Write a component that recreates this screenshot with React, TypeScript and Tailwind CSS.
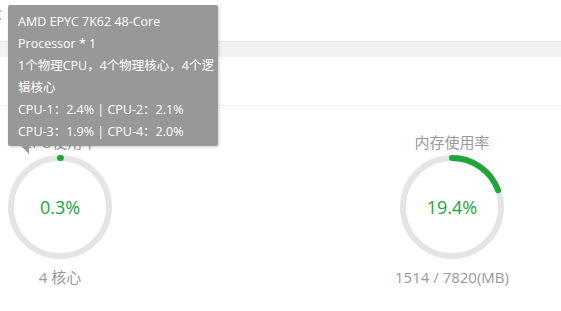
import React from "react";

const GREEN = "#20a53a";

function Ring({ percent }: { percent: number }) {
  const r = 49;
  const c = 2 * Math.PI * r;
  return (
    <div className="relative h-[104px] w-[104px]">
      <svg width="104" height="104" viewBox="0 0 104 104" className="-rotate-90">
        <circle cx="52" cy="52" r={r} fill="none" stroke="#e5e5e5" strokeWidth="6" />
        <circle
          cx="52"
          cy="52"
          r={r}
          fill="none"
          stroke={GREEN}
          strokeWidth="6"
          strokeLinecap="round"
          strokeDasharray={`${(c * percent) / 100} ${c}`}
        />
      </svg>
      <div className="absolute inset-0 flex items-center justify-center text-[18px] text-[#20a53a]">
        {percent}%
      </div>
    </div>
  );
}

function Gauge({
  title,
  percent,
  footer,
}: {
  title: string;
  percent: number;
  footer: string;
}) {
  return (
    <div className="flex w-[104px] flex-col items-center">
      <div className="whitespace-nowrap text-[15px] leading-5 text-[#999]">{title}</div>
      <div className="mt-[3px]">
        <Ring percent={percent} />
      </div>
      <div className="mt-[8px] whitespace-nowrap text-[15px] leading-5 text-[#999]">
        {footer}
      </div>
    </div>
  );
}

export default function App() {
  return (
    <div
      className="relative h-[311px] w-[561px] overflow-hidden bg-white"
      style={{ fontFamily: '"Open Sans", "Noto Sans CJK SC", sans-serif' }}
    >
      {/* header strip */}
      <div className="h-[42px] border-b border-[#e6e6e6]">
        <span className="-ml-[4px] block pt-[4px] text-[14px] leading-5 text-[#555]">：</span>
      </div>
      <div className="h-[15px] bg-[#f2f2f2]" />
      <div className="h-[49px] border-b border-[#eee]" />

      {/* gauges */}
      <div className="flex gap-[288px] pl-[8px] pt-[26px]">
        <Gauge title="CPU使用率" percent={0.3} footer="4 核心" />
        <Gauge title="内存使用率" percent={19.4} footer="1514 / 7820(MB)" />
      </div>

      {/* tips */}
      <div className="absolute left-[8px] top-[5px] w-[210px] rounded-[2px] bg-[#989898] pb-[3px] pl-[10px] pt-[6px] text-[12.5px] leading-[22px] whitespace-nowrap text-white shadow-[1px_1px_3px_rgba(0,0,0,0.2)]">
        AMD EPYC 7K62 48-Core
        <br />
        Processor * 1
        <br />
        1个物理CPU，4个物理核心，4个逻
        <br />
        辑核心
        <br />
        CPU-1：2.4% | CPU-2：2.1%
        <br />
        CPU-3：1.9% | CPU-4：2.0%
        <div className="absolute left-[13px] top-full h-0 w-0 border-l-[8px] border-t-[8px] border-l-transparent border-t-[#989898]" />
      </div>
    </div>
  );
}
